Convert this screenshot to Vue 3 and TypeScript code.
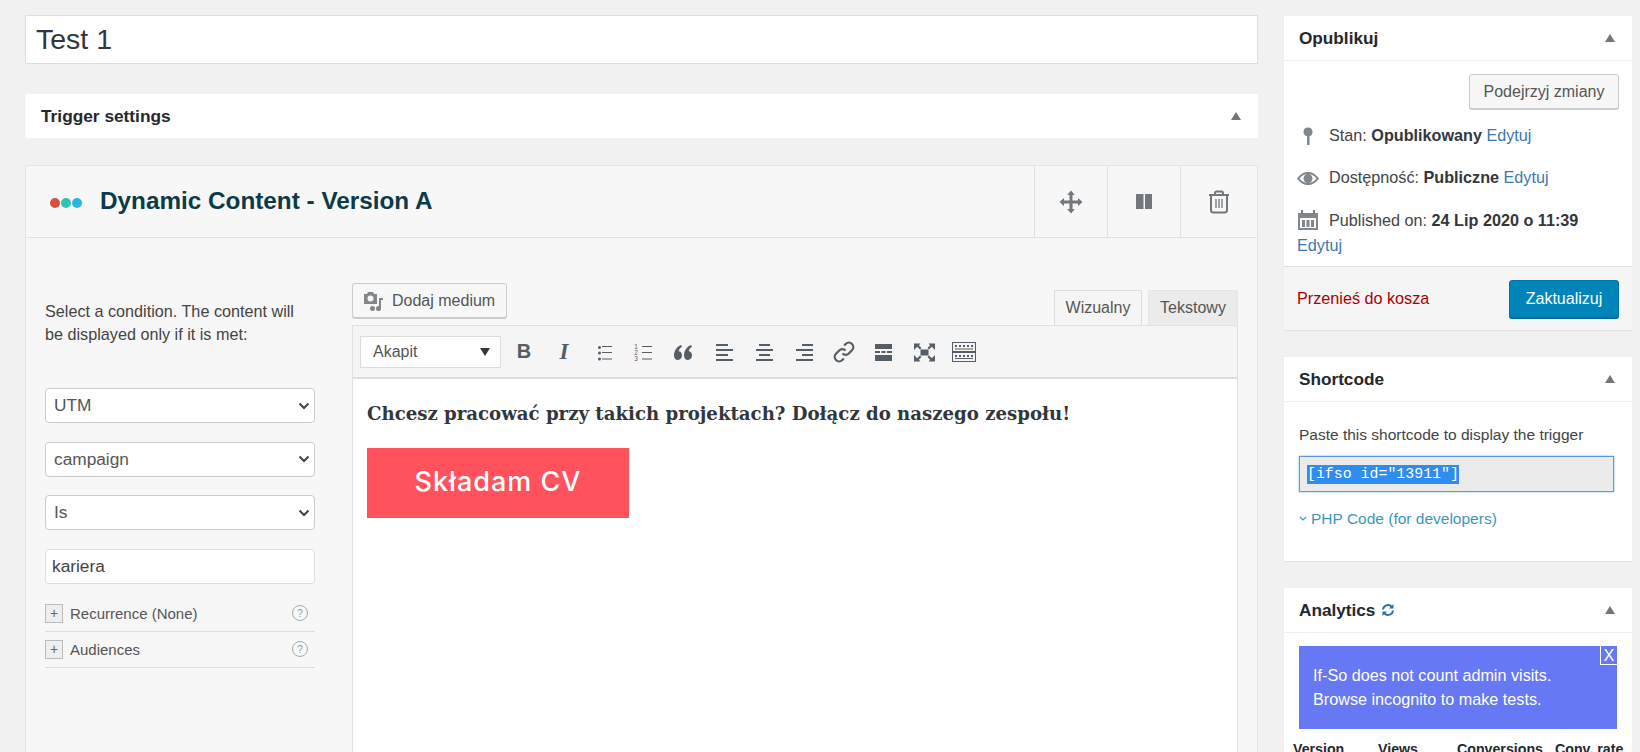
<script setup lang="ts">
interface Tool {
  name: string;
  glyph?: string;
  d?: string;
  stroke?: boolean;
  numbers?: boolean;
}

// rows of little keys for the kitchen sink button
const keyRow = (y: number): string =>
  [3, 7, 11, 15, 19].map((x) => `M${x} ${y}h2v2h-2z`).join(' ');

const tools: Tool[] = [
  { name: 'bold', glyph: 'B' },
  { name: 'italic', glyph: 'I' },
  {
    name: 'ul',
    d: 'M6 7.500a1.500 1.500 0 1 1 3 0a1.500 1.500 0 1 1-3 0z M6 13a1.500 1.500 0 1 1 3 0a1.500 1.500 0 1 1-3 0z M6 19a1.500 1.500 0 1 1 3 0a1.500 1.500 0 1 1-3 0z M10 6h10v1H10z M10 12h10v1H10z M10 18.500h10v1H10z',
  },
  { name: 'ol', d: 'M10 6h10v1H10z M10 12h10v1H10z M10 18.500h10v1H10z', numbers: true },
  {
    name: 'quote',
    d: 'M2 15.500C2 11 4.500 7 9 5l1 1.800C8 8 7 9.500 6.700 11.300 8.700 11.300 10 13 10 15.600 10 18 8.300 20 6 20 3.500 20 2 18 2 15.500z M12 15.500C12 11 14.500 7 19 5l1 1.800C18 8 17 9.500 16.700 11.300 18.700 11.300 20 13 20 15.600 20 18 18.300 20 16 20 13.500 20 12 18 12 15.500z',
  },
  { name: 'left', d: 'M4 4h12v2H4z M4 9h17v2H4z M4 14h12v2H4z M4 19h17v2H4z' },
  { name: 'center', d: 'M7 4h11v2H7z M4 9h17v2H4z M7 14h11v2H7z M4 19h17v2H4z' },
  { name: 'right', d: 'M10 4h11v2H10z M4 9h17v2H4z M10 14h11v2H10z M4 19h17v2H4z' },
  {
    name: 'link',
    stroke: true,
    d: 'M10.500 13.500a4.400 4.400 0 0 0 6.300 0l3.200-3.200a4.400 4.400 0 0 0-6.300-6.300l-1.500 1.500 M13.500 10.500a4.400 4.400 0 0 0-6.300 0l-3.200 3.200a4.400 4.400 0 0 0 6.300 6.300l1.500-1.500',
  },
  { name: 'more', d: 'M3 4h17v5H3z M3 11h5v2H3z M9.500 11h4v2h-4z M15 11h5v2h-5z M3 15h17v6H3z' },
  {
    name: 'fullscreen',
    d: 'M8.500 9.500h8v6h-8z M2 3.500h6.500L6.800 5.200 9.500 8 8 9.500 5.200 6.800 2 10z M23 3.500h-6.500l1.700 1.700L15.500 8 17 9.500l2.800-2.700L23 10z M2 21.500h6.500l-1.700-1.700 2.700-2.800L8 15.500l-2.800 2.700L2 15z M23 21.500h-6.500l1.700-1.700-2.700-2.800 1.500-1.500 2.800 2.700L23 15z',
  },
  {
    name: 'kitchen',
    d: `M0 2h24v20H0z M1 3v8h22V3z M1 13v8h22v-8z ${keyRow(5)} ${keyRow(15)} M3 8.500h18v1H3z M3 18h18v1H3z`,
  },
];

const conditions: string[] = ['UTM', 'campaign', 'Is'];
const extras: string[] = ['Recurrence (None)', 'Audiences'];
const statColumns: string[] = ['Version', 'Views', 'Conversions', 'Conv. rate'];
</script>

<template>
  <div class="page">
    <main class="main">
      <div class="title-input">Test 1</div>

      <div class="trigger-settings">
        <span>Trigger settings</span>
        <svg class="toggle" viewBox="0 0 10 8"><path d="M5 0l5 8H0z" /></svg>
      </div>

      <section class="version-card">
        <header class="version-head">
          <div class="dots"><i class="red"></i><i class="teal"></i><i class="blue"></i></div>
          <h2>Dynamic Content - Version A</h2>
          <div class="head-actions">
            <div class="head-action">
              <svg viewBox="0 0 24 24"><path d="M12 .500l3.800 4.500H13.500v5.500H19V8l4.500 4L19 16v-2.500h-5.500V19h2.300L12 23.500 8.200 19h2.300v-5.500H5V16L.500 12 5 8v2.500h5.500V5H8.200z" /></svg>
            </div>
            <div class="head-action">
              <svg viewBox="0 0 24 24"><path d="M4 4h7.500v15H4z M13 4h7v15h-7z" /></svg>
            </div>
            <div class="head-action wide">
              <svg class="line" viewBox="0 0 24 24">
                <path d="M2 5h20 M8 5V3a1.500 1.500 0 0 1 1.500-1.500h5A1.500 1.500 0 0 1 16 3v2 M4 5v15a2.500 2.500 0 0 0 2.500 2.500h11a2.500 2.500 0 0 0 2.500-2.500V5" />
                <path class="thin" d="M9 9v9M12 9v9M15 9v9" />
              </svg>
            </div>
          </div>
        </header>

        <div class="version-body">
          <aside class="condition-col">
            <p class="condition-intro">Select a condition. The content will be displayed only if it is met:</p>
            <div v-for="item in conditions" :key="item" class="field select">
              <span>{{ item }}</span>
              <svg viewBox="0 0 12 8"><path d="M1.500 1.500L6 6l4.500-4.500" /></svg>
            </div>
            <div class="field text">kariera</div>
            <div class="extras">
              <div v-for="item in extras" :key="item" class="extra-row">
                <span class="plus">+</span>
                <span class="extra-name">{{ item }}</span>
                <span class="help">?</span>
              </div>
            </div>
          </aside>

          <div class="editor-col">
            <div class="editor-top">
              <div class="media-btn">
                <svg viewBox="0 0 22 22">
                  <path fill-rule="evenodd" d="M2 4h3l1-2h5l1 2h3v10H2z M8.500 5.500a3 3 0 1 0 0 6a3 3 0 1 0 0-6z" />
                  <path d="M17 8h4v2h-2v8.500a2.500 2.500 0 1 1-2-2.400z M8 18.500a2.500 2.500 0 1 1 5 0a2.500 2.500 0 1 1-5 0z" />
                </svg>
                <span>Dodaj medium</span>
              </div>
              <div class="tabs">
                <div class="tab active">Wizualny</div>
                <div class="tab">Tekstowy</div>
              </div>
            </div>

            <div class="editor">
              <div class="toolbar">
                <div class="format-select">
                  <span>Akapit</span>
                  <svg viewBox="0 0 10 8"><path d="M0 0h10L5 8z" /></svg>
                </div>
                <div v-for="tool in tools" :key="tool.name" class="tool">
                  <span v-if="tool.glyph" class="glyph" :class="tool.name">{{ tool.glyph }}</span>
                  <svg v-else viewBox="0 0 24 24">
                    <path v-if="tool.stroke" class="stroke" :d="tool.d" />
                    <path v-else fill-rule="evenodd" :d="tool.d" />
                    <g v-if="tool.numbers" class="numbers">
                      <text x="4" y="8.500">1</text>
                      <text x="4" y="14.500">2</text>
                      <text x="4" y="20.500">3</text>
                    </g>
                  </svg>
                </div>
              </div>
              <div class="editor-content">
                <p class="content-lead">Chcesz pracować przy takich projektach? Dołącz do naszego zespołu!</p>
                <div class="cv-btn">Składam CV</div>
              </div>
            </div>
          </div>
        </div>
      </section>
    </main>

    <aside class="sidebar">
      <section class="box publish">
        <header class="box-head">
          <h3>Opublikuj</h3>
          <svg class="toggle" viewBox="0 0 10 8"><path d="M5 0l5 8H0z" /></svg>
        </header>
        <div class="publish-body">
          <div class="preview-row"><div class="btn">Podejrzyj zmiany</div></div>
          <div class="misc first">
            <svg viewBox="0 0 24 24"><path d="M6.500 8a4.500 4.500 0 1 1 6 4.200V21H10V12.200A4.500 4.500 0 0 1 6.500 8z" /></svg>Stan: <b>Opublikowany</b> <a>Edytuj</a>
          </div>
          <div class="misc">
            <svg viewBox="0 0 24 24"><path fill-rule="evenodd" d="M0 12.500C4 7 8 6 11 6s7 1 11 6.500C18 18 14 19 11 19S4 18 0 12.500z M2.500 12.500C5.500 9 8 8 11 8s5.500 1 8.500 4.500C16.500 16 14 17 11 17s-5.500-1-8.500-4.500z M6.500 12.500a4.500 4.500 0 1 0 9 0a4.500 4.500 0 1 0-9 0z" /></svg>Dostępność: <b>Publiczne</b> <a>Edytuj</a>
          </div>
          <div class="misc last">
            <svg viewBox="0 0 24 24"><path fill-rule="evenodd" d="M1 4h3V1h2v3h10V1h2v3h3v17H1z M3 9v10h16V9z M5 11h3v7H5z M9.500 11h3v7h-3z M14 11h3v7h-3z" /></svg>Published on: <b>24 Lip 2020 o 11:39</b> <a>Edytuj</a>
          </div>
        </div>
        <footer class="publish-foot">
          <a class="trash">Przenieś do kosza</a>
          <div class="btn primary">Zaktualizuj</div>
        </footer>
      </section>

      <section class="box shortcode">
        <header class="box-head">
          <h3>Shortcode</h3>
          <svg class="toggle" viewBox="0 0 10 8"><path d="M5 0l5 8H0z" /></svg>
        </header>
        <div class="shortcode-body">
          <p>Paste this shortcode to display the trigger</p>
          <div class="code-input"><span>[ifso id="13911"]</span></div>
          <div class="php-link">
            <svg viewBox="0 0 8 6"><path d="M1 1l3 3 3-3" /></svg>
            <span>PHP Code (for developers)</span>
          </div>
        </div>
      </section>

      <section class="box analytics">
        <header class="box-head">
          <h3>Analytics</h3>
          <svg class="refresh" viewBox="0 0 14 14">
            <path class="arc" d="M2 6.500A5 5 0 0 1 10.500 3.500 M12 7.500A5 5 0 0 1 3.500 10.500" />
            <path d="M12.500 1v4.500H8z M1.500 13V8.500H6z" />
          </svg>
          <svg class="toggle" viewBox="0 0 10 8"><path d="M5 0l5 8H0z" /></svg>
        </header>
        <div class="analytics-body">
          <div class="notice">
            <span class="notice-close">X</span>
            If-So does not count admin visits.<br />Browse incognito to make tests.
          </div>
          <div class="stats-head">
            <span v-for="col in statColumns" :key="col">{{ col }}</span>
          </div>
        </div>
      </section>
    </aside>
  </div>
</template>

<style>
html,
body {
  margin: 0;
  height: 752px;
  overflow: hidden;
  background: #f1f1f1;
}
</style>

<style scoped>
.page {
  display: flex;
  align-items: flex-start;
  gap: 26px;
  height: 752px;
  overflow: hidden;
  padding: 15px 8px 0 25px;
  box-sizing: border-box;
  font-family: "Liberation Sans", Arial, sans-serif;
  font-size: 16.2px;
  color: #444;
}

.main {
  width: 1233px;
  flex: none;
}

.title-input {
  height: 49px;
  box-sizing: border-box;
  padding: 0 10px;
  background: #fff;
  border: 1px solid #ddd;
  font-size: 28.5px;
  line-height: 47px;
  color: #32373c;
}

.trigger-settings {
  display: flex;
  align-items: center;
  justify-content: space-between;
  height: 44px;
  margin-top: 30px;
  padding: 0 17px 0 16px;
  background: #fff;
  font-size: 17.300px;
  font-weight: 700;
  color: #23282d;
}

.toggle {
  width: 10px;
  height: 8px;
  fill: #72777c;
  flex: none;
}

.version-card {
  margin-top: 27px;
  height: 640px;
  background: #f7f7f7;
  border: 1px solid #e5e5e5;
  border-bottom: 0;
  box-sizing: border-box;
}

.version-head {
  display: flex;
  align-items: center;
  height: 72px;
  box-sizing: border-box;
  border-bottom: 1px solid #e1e1e1;
}

.dots {
  display: flex;
  gap: 1px;
  margin: 2px 18px 0 24px;
}

.dots i {
  width: 10px;
  height: 10px;
  border-radius: 50%;
}

.dots .red { background: #d8503a; }
.dots .teal { background: #2cc4b4; }
.dots .blue { background: #2bb5e0; }

.version-head h2 {
  margin: 0 0 1px;
  font-size: 24.300px;
  font-weight: 700;
  color: #0b3a48;
}

.head-actions {
  display: flex;
  align-self: stretch;
  margin-left: auto;
}

.head-action {
  display: flex;
  align-items: center;
  justify-content: center;
  width: 73px;
  border-left: 1px solid #e1e1e1;
  box-sizing: border-box;
}

.head-action.wide {
  width: 77px;
}

.head-action svg {
  width: 24px;
  height: 24px;
  fill: #72777c;
}

.head-action svg.line {
  fill: none;
  stroke: #72777c;
  stroke-width: 2;
}

.head-action svg.line .thin {
  stroke-width: 1.300;
}

.version-body {
  display: flex;
  gap: 37px;
  padding: 45px 19px 0 19px;
}

.condition-col {
  width: 270px;
  flex: none;
}

.condition-intro {
  max-width: 260px;
  margin: 17px 0 42px;
  font-size: 16.2px;
  line-height: 23px;
  color: #444;
}

.field {
  display: flex;
  align-items: center;
  justify-content: space-between;
  height: 35px;
  margin-bottom: 18.670px;
  box-sizing: border-box;
  background: #fff;
  border: 1px solid #ccc;
  border-radius: 4px;
  padding: 0 4px 0 8px;
  font-size: 17.300px;
  color: #555;
}

.field.text {
  margin-bottom: 20px;
  padding-left: 6px;
  border-color: #ddd;
  color: #444;
}

.field svg {
  width: 12px;
  height: 8px;
  fill: none;
  stroke: #444;
  stroke-width: 2;
}

.extra-row {
  display: flex;
  align-items: center;
  padding: 8px 0;
  border-bottom: 1px solid #ddd;
  font-size: 15px;
  line-height: 19px;
  color: #555;
}

.extra-row:first-child {
  padding-top: 0;
}

.plus {
  display: flex;
  align-items: center;
  justify-content: center;
  width: 18px;
  height: 19px;
  margin-right: 7px;
  box-sizing: border-box;
  background: #eee;
  border: 1px solid #bbb;
  font-size: 14px;
  color: #666;
}

.help {
  display: flex;
  align-items: center;
  justify-content: center;
  width: 16px;
  height: 16px;
  margin: 0 7px 0 auto;
  box-sizing: border-box;
  border: 1px solid #aaa;
  border-radius: 50%;
  font-size: 10px;
  color: #999;
}

.editor-col {
  width: 886px;
  flex: none;
}

.editor-top {
  display: flex;
  align-items: flex-start;
  justify-content: space-between;
}

.media-btn {
  display: flex;
  align-items: center;
  gap: 8px;
  height: 35px;
  padding: 0 11px 0 9px;
  box-sizing: border-box;
  background: #f7f7f7;
  border: 1px solid #ccc;
  border-radius: 3px;
  box-shadow: 0 1px 0 #ccc;
  font-size: 16px;
  color: #555;
}

.media-btn svg {
  width: 22px;
  height: 22px;
  fill: #82878c;
}

.tabs {
  display: flex;
  gap: 6px;
  margin-top: 7px;
}

.tab {
  display: flex;
  align-items: center;
  justify-content: center;
  width: 90px;
  height: 35px;
  box-sizing: border-box;
  background: #ebebeb;
  border: 1px solid #e5e5e5;
  border-bottom: 0;
  font-size: 16px;
  color: #555;
}

.tab.active {
  width: 88px;
  background: #f5f5f5;
  border-color: #ddd;
}

.editor {
  height: 460px;
  box-sizing: border-box;
  border: 1px solid #e1e1e1;
  background: #fff;
}

.toolbar {
  display: flex;
  align-items: center;
  height: 53px;
  padding: 0 0 0 7px;
  box-sizing: border-box;
  background: #f5f5f5;
  border-bottom: 2px solid #dedede;
}

.format-select {
  display: flex;
  align-items: center;
  justify-content: space-between;
  width: 141px;
  height: 32px;
  margin-right: 3px;
  padding: 0 10px 0 12px;
  box-sizing: border-box;
  background: #fff;
  border: 1px solid #ddd;
  font-size: 16px;
  color: #555;
}

.format-select svg {
  width: 10px;
  height: 8px;
  fill: #32373c;
}

.tool {
  display: flex;
  align-items: center;
  justify-content: center;
  width: 40px;
  height: 32px;
  flex: none;
  color: #555d66;
}

.tool svg {
  width: 24px;
  height: 24px;
  fill: currentColor;
}

.tool .stroke {
  fill: none;
  stroke: currentColor;
  stroke-width: 2.200;
}

.numbers text {
  font-family: "Liberation Sans", Arial, sans-serif;
  font-size: 6.500px;
  text-anchor: middle;
}

.glyph.bold {
  font-family: "Liberation Sans", Arial, sans-serif;
  font-size: 20px;
  font-weight: 700;
}

.glyph.italic {
  font-family: "Liberation Serif", "Times New Roman", serif;
  font-size: 23px;
  font-weight: 700;
  font-style: italic;
}

.editor-content {
  padding: 23px 14px;
}

.content-lead {
  margin: 0;
  font-family: "DejaVu Serif", "Liberation Serif", serif;
  font-size: 18.150px;
  font-weight: 700;
  line-height: 23px;
  color: #32373c;
  white-space: nowrap;
}

.cv-btn {
  display: flex;
  align-items: center;
  justify-content: center;
  width: 262px;
  height: 70px;
  margin-top: 23px;
  padding-bottom: 3px;
  box-sizing: border-box;
  background: #ff525d;
  font-family: Inter, "Liberation Sans", sans-serif;
  font-size: 27px;
  font-weight: 500;
  letter-spacing: 1px;
  color: #fff;
}

.sidebar {
  display: flex;
  flex-direction: column;
  gap: 27px;
  width: 348px;
  flex: none;
  margin-top: 1px;
}

.box {
  background: #fff;
  box-shadow: 0 1px 1px rgba(0, 0, 0, 0.06);
}

.box-head {
  display: flex;
  align-items: center;
  height: 45px;
  padding: 0 17px 0 15px;
  box-sizing: border-box;
  border-bottom: 1px solid #eee;
}

.box-head h3 {
  margin: 0;
  font-size: 17.200px;
  font-weight: 700;
  color: #23282d;
}

.box-head .toggle {
  margin-left: auto;
}

.publish-body {
  padding: 13px 13px 8px;
}

.preview-row {
  display: flex;
  justify-content: flex-end;
}

.btn {
  display: flex;
  align-items: center;
  justify-content: center;
  width: 150px;
  height: 35px;
  box-sizing: border-box;
  background: #f7f7f7;
  border: 1px solid #ccc;
  border-radius: 3px;
  box-shadow: 0 1px 0 #ccc;
  font-size: 16px;
  color: #555;
}

.btn.primary {
  width: 110px;
  height: 38px;
  background: #0085ba;
  border-color: #0073aa;
  box-shadow: 0 1px 0 #006799;
  color: #fff;
}

.misc {
  margin-top: 17px;
  line-height: 25px;
  font-size: 16.2px;
}

.misc.first {
  margin-top: 14px;
}

.misc.last {
  margin-top: 18px;
}

.misc svg {
  width: 24px;
  height: 24px;
  margin-right: 8px;
  fill: #82878c;
  vertical-align: -7px;
}

.misc b {
  color: #32373c;
}

.misc a {
  color: #3c78ae;
}

.publish-foot {
  display: flex;
  align-items: center;
  justify-content: space-between;
  height: 64px;
  padding: 0 13px;
  box-sizing: border-box;
  background: #f5f5f5;
  border-top: 1px solid #ddd;
}

.trash {
  color: #a00;
  font-size: 16.2px;
}

.shortcode-body {
  height: 159px;
  padding: 23px 18px 0 15px;
  box-sizing: border-box;
}

.shortcode-body p {
  margin: 0;
  line-height: 20px;
  font-size: 15.500px;
}

.code-input {
  display: flex;
  align-items: center;
  height: 36px;
  margin-top: 11px;
  padding: 1px 7px 0;
  box-sizing: border-box;
  background: #ebebeb;
  border: 1px solid #5b9dd9;
  box-shadow: 0 0 2px rgba(30, 140, 190, 0.6);
}

.code-input span {
  padding: 1px 0;
  background: #2f8cf0;
  font-family: "Liberation Mono", "Courier New", monospace;
  font-size: 14.900px;
  line-height: 17px;
  color: #fff;
}

.php-link {
  display: flex;
  align-items: center;
  gap: 4px;
  margin-top: 18px;
  color: #3a98ba;
  font-size: 15.500px;
}

.php-link svg {
  width: 8px;
  height: 6px;
  fill: none;
  stroke: #3a98ba;
  stroke-width: 1.200;
}

.refresh {
  width: 14px;
  height: 14px;
  margin-left: 6px;
  fill: #2c6ea6;
}

.refresh .arc {
  fill: none;
  stroke: #2c6ea6;
  stroke-width: 2;
}

.analytics-body {
  padding: 13px 15px 0;
}

.notice {
  position: relative;
  height: 83px;
  box-sizing: border-box;
  padding: 17px 14px 0;
  width: 318px;
  background: #6678f4;
  font-size: 16.2px;
  line-height: 24px;
  color: #fff;
}

.notice-close {
  position: absolute;
  top: 0;
  right: 0;
  width: 17px;
  height: 19px;
  box-sizing: border-box;
  border-left: 1px solid #fff;
  border-bottom: 1px solid #fff;
  line-height: 18px;
  text-align: center;
}

.stats-head {
  display: grid;
  grid-template-columns: 85px 79px 98px auto;
  margin: 10px -8px 0 -6px;
  font-size: 14.200px;
  font-weight: 700;
  line-height: 20px;
  color: #23282d;
  white-space: nowrap;
}
</style>
